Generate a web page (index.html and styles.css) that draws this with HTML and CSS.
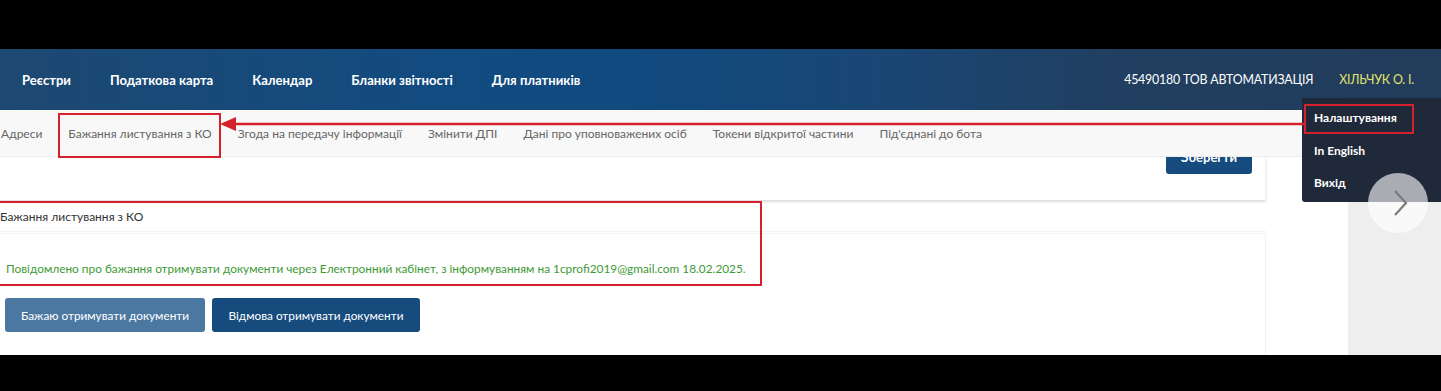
FILE: index.html
```html
<!DOCTYPE html>
<html lang="uk">
<head>
<meta charset="utf-8">
<title>Кабінет платника</title>
<link rel="stylesheet" href="styles.css">
</head>
<body>
<div class="frame">
  <div class="bar-top"></div>
  <div class="page">
    <header class="nav">
      <ul class="nav-menu">
        <li>Реєстри</li>
        <li>Податкова карта</li>
        <li>Календар</li>
        <li>Бланки звітності</li>
        <li>Для платників</li>
      </ul>
      <div class="nav-user">
        <span class="org">45490180 ТОВ АВТОМАТИЗАЦІЯ</span>
        <span class="person">ХІЛЬЧУК О. І.</span>
      </div>
    </header>
    <nav class="tabs">
      <span class="tab">Адреси</span>
      <span class="tab">Бажання листування з КО</span>
      <span class="tab">Згода на передачу інформації</span>
      <span class="tab">Змінити ДПІ</span>
      <span class="tab">Дані про уповноважених осіб</span>
      <span class="tab">Токени відкритої частини</span>
      <span class="tab">Під'єднані до бота</span>
    </nav>
    <div class="body">
      <main class="main">
        <div class="card-prev">
          <button class="btn btn-save">Зберегти</button>
        </div>
        <h2 class="section-title">Бажання листування з КО</h2>
        <div class="card">
          <p class="notice">Повідомлено про бажання отримувати документи через Електронний кабінет, з інформуванням на 1cprofi2019@gmail.com 18.02.2025.</p>
          <div class="actions">
            <button class="btn btn-light">Бажаю отримувати документи</button>
            <button class="btn btn-dark">Відмова отримувати документи</button>
          </div>
        </div>
      </main>
      <aside class="side"></aside>
    </div>

    <ul class="dropdown">
      <li>Налаштування</li>
      <li>In English</li>
      <li>Вихід</li>
    </ul>

    <div class="mark mark-tab"></div>
    <div class="mark mark-menu"></div>
    <div class="mark mark-section"></div>
    <div class="arrow">
      <svg width="1084" height="16" viewBox="0 0 1084 16">
        <line x1="14" y1="8" x2="1084" y2="8" stroke="#d3222c" stroke-width="2.5"/>
        <polygon points="0,8 16,1 16,15" fill="#d3222c"/>
      </svg>
    </div>
    <div class="pager">
      <svg width="20" height="30" viewBox="0 0 20 30">
        <polyline points="5,3 16,15 5,27" fill="none" stroke="#7a7a7a" stroke-width="2.2"/>
      </svg>
    </div>
  </div>
  <div class="bar-bottom"></div>
</div>
</body>
</html>
```

FILE: styles.css
```css
* { box-sizing: border-box; }

html, body {
  margin: 0;
  padding: 0;
  background: #000;
}

body {
  font-family: Lato, "Noto Sans", "Liberation Sans", sans-serif;
  font-size: 12px;
  color: #333;
}

.frame {
  width: 1441px;
  height: 391px;
  display: flex;
  flex-direction: column;
  overflow: hidden;
}

.bar-top { height: 49px; background: #000; flex: none; }
.bar-bottom { flex: 1; background: #000; }

.page {
  position: relative;
  height: 306px;
  flex: none;
  background: #fff;
  overflow: hidden;
}

/* top navigation */
.nav {
  height: 61px;
  display: flex;
  align-items: center;
  justify-content: space-between;
  padding: 0 27px 0 22px;
  background: linear-gradient(90deg, #1d4871 0%, #124b80 30%, #114a7f 45%, #1a4673 62%, #213f60 78%, #223c5b 100%);
  color: #fff;
}

.nav-menu {
  list-style: none;
  margin: 0;
  padding: 0;
  display: flex;
  gap: 39px;
  font-weight: 700;
  font-size: 13.05px;
}

.nav-user {
  display: flex;
  gap: 26px;
  font-size: 12.4px;
  letter-spacing: -0.2px;
}

.person { color: #e4e26c; }

/* tabs */
.tabs {
  position: relative;
  z-index: 1;
  height: 47px;
  display: flex;
  align-items: center;
  margin-left: -12px;
  background: #f8f8f8;
  border-bottom: 1px solid #ececec;
  color: #666;
}

.tab {
  padding: 0 13px;
  white-space: nowrap;
}

/* body */
.body {
  display: flex;
  justify-content: space-between;
  height: 198px;
}

.main {
  width: 1266px;
}

.side {
  width: 93px;
  background: #eeeeee;
}

.card-prev {
  height: 43px;
  display: flex;
  justify-content: flex-end;
  align-items: flex-start;
  padding-right: 13px;
  background: #fff;
  border-right: 1px solid #f2f2f2;
  box-shadow: 0 2px 2px rgba(0, 0, 0, 0.14);
}

.btn {
  font-family: Lato, "Noto Sans", "Liberation Sans", sans-serif;
  font-size: 11.8px;
  color: #fff;
  border: none;
  border-radius: 3px;
  height: 34px;
  padding: 0;
  white-space: nowrap;
}

.btn-save {
  margin-top: -17px;
  width: 86px;
  background: #164b7e;
  font-weight: 700;
  font-size: 13px;
}

.section-title {
  margin: 1px 0 0;
  height: 31px;
  display: flex;
  align-items: center;
  font-size: 12px;
  font-weight: 400;
  color: #333;
  border-bottom: 1px solid #f3f3f3;
}

.card {
  margin-top: 1px;
  height: 130px;
  padding: 27px 0 0 6px;
  border-top: 1px solid #f4f4f4;
  border-right: 1px solid #f2f2f2;
}

.notice {
  margin: 0;
  line-height: 16px;
  font-size: 11.85px;
  color: #3e9a36;
  white-space: nowrap;
}

.actions {
  display: flex;
  gap: 7px;
  margin: 21px 0 0 -1px;
}

.btn-light { width: 200px; background: #4b78a1; }
.btn-dark { width: 208px; background: #164b7e; }

/* user dropdown */
.dropdown {
  position: absolute;
  z-index: 2;
  left: 1302px;
  top: 49px;
  width: 139px;
  height: 104px;
  margin: 0;
  padding: 12px 0 0 12px;
  list-style: none;
  background: #1f2939;
  color: #fff;
  font-weight: 700;
  font-size: 12px;
  border-radius: 0 0 0 3px;
}

.dropdown li {
  height: 32.5px;
  line-height: 16px;
}

/* annotations */
.mark {
  position: absolute;
  z-index: 3;
  border: 2px solid #d3222c;
}

.mark-tab { left: 58px; top: 64px; width: 163px; height: 45px; }
.mark-menu { left: 1304px; top: 55px; width: 110px; height: 30px; }
.mark-section { left: -3px; top: 152px; width: 765px; height: 85px; }

.arrow {
  position: absolute;
  z-index: 3;
  left: 220px;
  top: 67px;
  height: 16px;
  line-height: 0;
}

.pager {
  position: absolute;
  z-index: 4;
  left: 1368px;
  top: 124px;
  width: 60px;
  height: 60px;
  border-radius: 50%;
  background: rgba(255, 255, 255, 0.62);
  display: flex;
  align-items: center;
  justify-content: center;
  padding-left: 3px;
}
```
